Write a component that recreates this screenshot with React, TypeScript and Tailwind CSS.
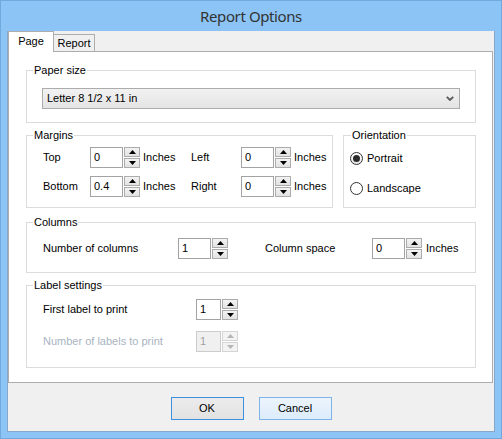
import React from "react";

function Spin({ disabled }: { disabled?: boolean }) {
  const b = disabled
    ? "border-[#d5d5d5] bg-[#f3f3f3]"
    : "border-[#acacac] bg-linear-to-b from-[#f3f3f3] to-[#e2e2e2]";
  const c = disabled ? "#b5b5b5" : "#000";
  return (
    <div className="flex flex-col gap-[1px] w-[16px] h-[21px] ml-[1px] shrink-0">
      <div className={`h-[10px] border ${b} flex items-center justify-center`}>
        <svg width="7" height="4" viewBox="0 0 7 4">
          <path d="M3.5 0L7 4H0z" fill={c} />
        </svg>
      </div>
      <div className={`h-[10px] border ${b} flex items-center justify-center`}>
        <svg width="7" height="4" viewBox="0 0 7 4">
          <path d="M0 0H7L3.5 4z" fill={c} />
        </svg>
      </div>
    </div>
  );
}

function Input({ value, w, disabled }: { value: string; w: string; disabled?: boolean }) {
  return (
    <div
      className={`${w} h-[21px] border flex items-center pl-[3px] shrink-0 ${
        disabled ? "border-[#cccccc] bg-[#f0f0f0] text-[#a0a0a0]" : "border-[#a3a3a3] bg-white"
      }`}
    >
      {value}
    </div>
  );
}

function Group({
  title,
  className,
  inner,
  legendMl,
  children,
}: {
  title: string;
  className?: string;
  inner?: string;
  legendMl?: string;
  children: React.ReactNode;
}) {
  return (
    <fieldset className={`border border-[#dcdcdc] ${className ?? ""}`}>
      <legend className={`${legendMl ?? "ml-[6px]"} px-[1px] leading-[13px]`}>{title}</legend>
      <div className={inner}>{children}</div>
    </fieldset>
  );
}

export default function App() {
  return (
    <div className="w-[502px] h-[439px] bg-[#8bc4f5] border border-[#6fa9de] flex flex-col px-[6px] pb-[6px] font-['Liberation_Sans',Arial,sans-serif] text-[11px] text-black">
      <div className="h-[30px] flex items-center justify-center font-['Noto_Sans',sans-serif] text-[15px] tracking-[-0.4px] text-[#333333]">
        Report Options
      </div>
      <div className="flex-1 bg-[#f0f0f0] border-l border-r border-b border-[#86a9cb] flex flex-col">
        {/* tabs */}
        <div className="h-[20px] flex items-end">
          <div className="relative z-10 h-[21px] -mb-px w-[46px] bg-white border-t border-l border-r border-[#adadad] flex items-center justify-center pb-[1px]">
            Page
          </div>
          <div className="h-[17px] w-[42px] -ml-px bg-[#f0f0f0] border-t border-l border-r border-[#adadad] flex items-center justify-center">
            Report
          </div>
        </div>
        {/* panel */}
        <div className="h-[332px] mr-[1px] bg-white border border-[#adadad] pt-[12px] pl-[17px] pr-[16px] flex flex-col">
          <Group title="Paper size" inner="px-[15px] pb-[13px]">
            <div className="mt-[11px] h-[21px] border border-[#acacac] bg-linear-to-b from-[#f2f2f2] to-[#e4e4e4] flex items-center justify-between pl-[4px] pr-[5px]">
              <span>Letter 8 1/2 x 11 in</span>
              <svg width="8" height="5" viewBox="0 0 8 5">
                <path d="M0.8 0.8L4 4L7.2 0.8" fill="none" stroke="#5a5a5a" strokeWidth="1.8" />
              </svg>
            </div>
          </Group>

          <div className="mt-[6px] flex gap-[10px]">
            <Group title="Margins" className="w-[307px]" inner="pl-[16px] pb-[10px]">
              <div className="mt-[5px] flex items-center">
                <span className="w-[47px]">Top</span>
                <Input value="0" w="w-[33px]" />
                <Spin />
                <span className="ml-[3px] w-[48px]">Inches</span>
                <span className="w-[50px]">Left</span>
                <Input value="0" w="w-[33px]" />
                <Spin />
                <span className="ml-[3px]">Inches</span>
              </div>
              <div className="mt-[8px] flex items-center">
                <span className="w-[47px]">Bottom</span>
                <Input value="0.4" w="w-[33px]" />
                <Spin />
                <span className="ml-[3px] w-[48px]">Inches</span>
                <span className="w-[50px]">Right</span>
                <Input value="0" w="w-[33px]" />
                <Spin />
                <span className="ml-[3px]">Inches</span>
              </div>
            </Group>
            <Group title="Orientation" legendMl="ml-[7px]" className="flex-1" inner="pl-[6px]">
              <div className="mt-[8px] h-[17px] flex items-center">
                <div className="w-[13px] h-[13px] rounded-full border border-[#333333] bg-linear-to-b from-[#ffffff] to-[#e6e6e6] flex items-center justify-center">
                  <div className="w-[7px] h-[7px] rounded-full bg-[#2a2a2a]" />
                </div>
                <span className="ml-[4px]">Portrait</span>
              </div>
              <div className="mt-[13px] h-[17px] flex items-center">
                <div className="w-[13px] h-[13px] rounded-full border border-[#333333] bg-white" />
                <span className="ml-[4px]">Landscape</span>
              </div>
            </Group>
          </div>

          <Group title="Columns" className="mt-[8px]" inner="pl-[16px] pb-[13px]">
            <div className="mt-[9px] flex items-center">
              <span className="w-[135px]">Number of columns</span>
              <Input value="1" w="w-[33px]" />
              <Spin />
              <span className="ml-[37px] w-[107px]">Column space</span>
              <Input value="0" w="w-[33px]" />
              <Spin />
              <span className="ml-[4px]">Inches</span>
            </div>
          </Group>

          <Group title="Label settings" className="mt-[6px]" inner="pl-[16px] pb-[15px]">
            <div className="mt-[7px] flex items-center">
              <span className="w-[153px]">First label to print</span>
              <Input value="1" w="w-[25px]" />
              <Spin />
            </div>
            <div className="mt-[11px] flex items-center">
              <span className="w-[153px] text-[#a8b3c1]">Number of labels to print</span>
              <Input value="1" w="w-[25px]" disabled />
              <Spin disabled />
            </div>
          </Group>
        </div>
        {/* buttons */}
        <div className="mt-[14px] flex justify-center gap-[15px]">
          <div className="w-[73px] h-[23px] border border-[#3f8fdc] bg-linear-to-b from-[#ececec] to-[#e2e2e2] flex items-center justify-center">
            OK
          </div>
          <div className="w-[73px] h-[23px] border border-[#7eb4ea] bg-linear-to-b from-[#ecf4fc] to-[#dcecfc] flex items-center justify-center">
            Cancel
          </div>
        </div>
      </div>
    </div>
  );
}
